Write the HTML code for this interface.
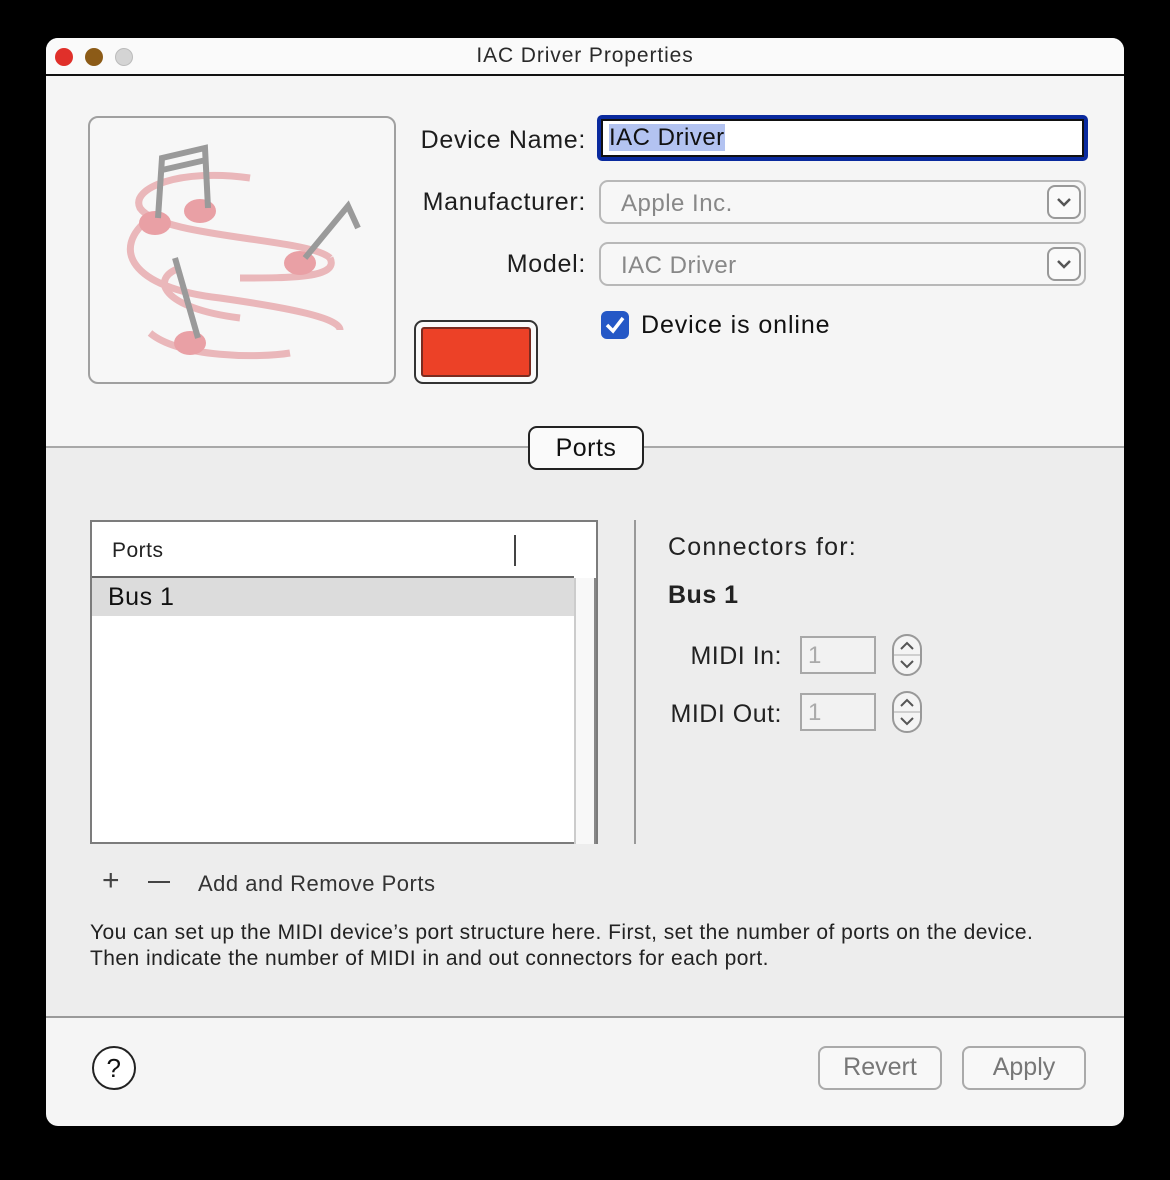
<!DOCTYPE html>
<html><head><meta charset="utf-8"><style>
*{margin:0;padding:0;box-sizing:border-box}
body{width:1170px;height:1180px;background:#000;font-family:"Liberation Sans",sans-serif;position:relative;overflow:hidden;letter-spacing:0.5px}
.a{position:absolute}
#win{position:absolute;left:46px;top:38px;width:1078px;height:1088px;background:#f5f5f5;border-radius:12px;overflow:hidden}
.lbl{font-size:25px;color:#1d1d1d;text-align:right;width:200px;letter-spacing:0.7px}
.pop{border:2px solid #b8b8b8;border-radius:9px;background:#f7f7f7;height:44px;font-size:24px;color:#888;padding:8px 20px}
.chev{position:absolute;right:3px;top:3px;width:34px;height:34px;border:2px solid #999;border-radius:8px;background:#fafafa}
.btn{border:2px solid #aaa;border-radius:8px;background:#f8f8f8;font-size:25px;color:#777;text-align:center;line-height:38px;letter-spacing:0}
.step{width:30px;height:42px;border:2px solid #999;border-radius:15px;background:#f4f4f4}
.fld{width:76px;height:38px;border:2px solid #a8a8a8;background:#f2f2f2;font-size:24px;color:#aaa;padding:4px 6px}
</style></head><body>
<div id="win">
 <div class="a" style="left:0;top:0;width:1078px;height:38px;background:#fafafa;border-bottom:2px solid #111"></div>
 <div class="a" style="left:9px;top:10px;width:18px;height:18px;border-radius:50%;background:#e0302a"></div>
 <div class="a" style="left:39px;top:10px;width:18px;height:18px;border-radius:50%;background:#8c5b17"></div>
 <div class="a" style="left:69px;top:10px;width:18px;height:18px;border-radius:50%;background:#d4d4d4;border:1px solid #bbb"></div>
 <div class="a" style="left:0;top:6px;width:1078px;text-align:center;font-size:21px;color:#2a2a2a;letter-spacing:0.9px">IAC Driver Properties</div>

 <div class="a" style="left:42px;top:78px;width:308px;height:268px;border:2px solid #a0a0a0;border-radius:10px;background:#f7f7f7">
  <svg width="304" height="264" viewBox="0 0 304 264">
   <g fill="none" stroke="#e8a8ab" stroke-width="7" opacity=".8">
    <path d="M160 60 C 90 50, 40 70, 50 90 C 70 120, 220 120, 240 140"/>
    <path d="M60 100 C 20 130, 40 170, 130 180 C 200 190, 250 200, 250 212"/>
    <path d="M90 150 C 60 160, 70 190, 150 200"/>
    <path d="M60 215 C 90 240, 170 240, 200 235"/>
    <path d="M240 140 C 250 160, 200 160, 150 160"/>
   </g>
   <g fill="#e9a0a5"><ellipse cx="65" cy="105" rx="16" ry="12"/><ellipse cx="110" cy="93" rx="16" ry="12"/><ellipse cx="210" cy="145" rx="16" ry="12"/><ellipse cx="100" cy="225" rx="16" ry="12"/></g>
   <g stroke="#9a9a9a" stroke-width="6" fill="none"><path d="M68 100 L 72 40 L 115 30 L 118 90"/><path d="M72 52 L 116 42"/><path d="M215 140 L 258 88 L 268 110"/><path d="M85 140 L 108 220"/></g>
  </svg>
 </div>

 <div class="a lbl" style="left:340px;top:88px">Device Name:</div>
 <div class="a" style="left:551px;top:77px;width:491px;height:46px;background:#0a2a9e;border-radius:5px;padding:4px">
  <div style="background:#fff;border:2px solid #111;height:38px;padding:3px 6px;font-size:24px;color:#111"><span style="background:#b3c3f1">IAC Driver</span></div>
 </div>
 <div class="a lbl" style="left:340px;top:150px">Manufacturer:</div>
 <div class="a pop" style="left:553px;top:142px;width:487px">Apple Inc.<div class="chev"><svg width="30" height="30"><path d="M9 12l6 6 6-6" stroke="#555" stroke-width="2.5" fill="none"/></svg></div></div>
 <div class="a lbl" style="left:340px;top:212px">Model:</div>
 <div class="a pop" style="left:553px;top:204px;width:487px">IAC Driver<div class="chev"><svg width="30" height="30"><path d="M9 12l6 6 6-6" stroke="#555" stroke-width="2.5" fill="none"/></svg></div></div>
 <div class="a" style="left:555px;top:273px;width:28px;height:28px;background:#2558c6;border-radius:6px"><svg width="28" height="28"><path d="M6 14l6 6 10-13" stroke="#fff" stroke-width="3.5" fill="none"/></svg></div>
 <div class="a" style="left:595px;top:273px;font-size:25px;color:#111;letter-spacing:0.9px">Device is online</div>

 <div class="a" style="left:368px;top:282px;width:124px;height:64px;border:2px solid #333;border-radius:9px;background:#fafafa;padding:5px">
  <div style="width:100%;height:100%;background:#ec4127;border:2px solid #7a2b20;border-radius:3px"></div>
 </div>

 <div class="a" style="left:0;top:408px;width:1078px;height:572px;background:#ededed;border-top:2px solid #a8a8a8"></div>
 <div class="a" style="left:482px;top:388px;width:116px;height:44px;border:2px solid #222;border-radius:9px;background:#fafafa;font-size:25px;text-align:center;line-height:40px;color:#111">Ports</div>

 <div class="a" style="left:44px;top:482px;width:508px;height:324px;border:2px solid #7c7c7c;background:#fff">
  <div class="a" style="left:0;top:0;height:56px;background:#fff;border-bottom:2px solid #666;width:482px"></div>
  <div class="a" style="left:20px;top:17px;font-size:21px;color:#222">Ports</div>
  <div class="a" style="left:422px;top:13px;width:2px;height:31px;background:#444"></div>
  <div class="a" style="left:0;top:56px;width:482px;height:38px;background:#dcdcdc"></div>
  <div class="a" style="left:16px;top:61px;font-size:25px;color:#111">Bus 1</div>
  <div class="a" style="left:482px;top:56px;width:22px;height:266px;background:#f8f8f8;border-left:2px solid #ccc;border-right:2px solid #888"></div>
 </div>
 <div class="a" style="left:588px;top:482px;width:2px;height:324px;background:#999"></div>

 <div class="a" style="left:56px;top:826px;font-size:30px;color:#444;font-weight:300">+</div>
 <div class="a" style="left:102px;top:843px;width:22px;height:2px;background:#444"></div>
 <div class="a" style="left:152px;top:833px;font-size:22px;color:#333">Add and Remove Ports</div>
 <div class="a" style="left:44px;top:882px;font-size:21px;line-height:26px;color:#222;width:1020px;letter-spacing:0.45px">You can set up the MIDI device’s port structure here. First, set the number of ports on the device.<br>Then indicate the number of MIDI in and out connectors for each port.</div>

 <div class="a" style="left:622px;top:495px;font-size:25px;color:#222;letter-spacing:1.2px">Connectors for:</div>
 <div class="a" style="left:622px;top:543px;font-size:25px;color:#222;font-weight:bold">Bus 1</div>
 <div class="a" style="left:612px;top:604px;font-size:25px;color:#222;width:124px;text-align:right">MIDI In:</div>
 <div class="a" style="left:612px;top:662px;font-size:25px;color:#222;width:124px;text-align:right">MIDI Out:</div>
 <div class="a fld" style="left:754px;top:598px">1</div>
 <div class="a fld" style="left:754px;top:655px">1</div>
 <div class="a step" style="left:846px;top:596px"><svg width="26" height="38"><path d="M7 13l6-6 6 6M7 25l6 6 6-6" stroke="#555" stroke-width="2" fill="none"/><path d="M0 19h26" stroke="#aaa"/></svg></div>
 <div class="a step" style="left:846px;top:653px"><svg width="26" height="38"><path d="M7 13l6-6 6 6M7 25l6 6 6-6" stroke="#555" stroke-width="2" fill="none"/><path d="M0 19h26" stroke="#aaa"/></svg></div>

 <div class="a" style="left:0;top:978px;width:1078px;height:2px;background:#9a9a9a"></div>
 <div class="a" style="left:46px;top:1008px;width:44px;height:44px;border:2px solid #222;border-radius:50%;background:#fff;font-size:26px;text-align:center;line-height:40px;color:#111">?</div>
 <div class="a btn" style="left:772px;top:1008px;width:124px;height:44px">Revert</div>
 <div class="a btn" style="left:916px;top:1008px;width:124px;height:44px">Apply</div>
</div>
</body></html>
